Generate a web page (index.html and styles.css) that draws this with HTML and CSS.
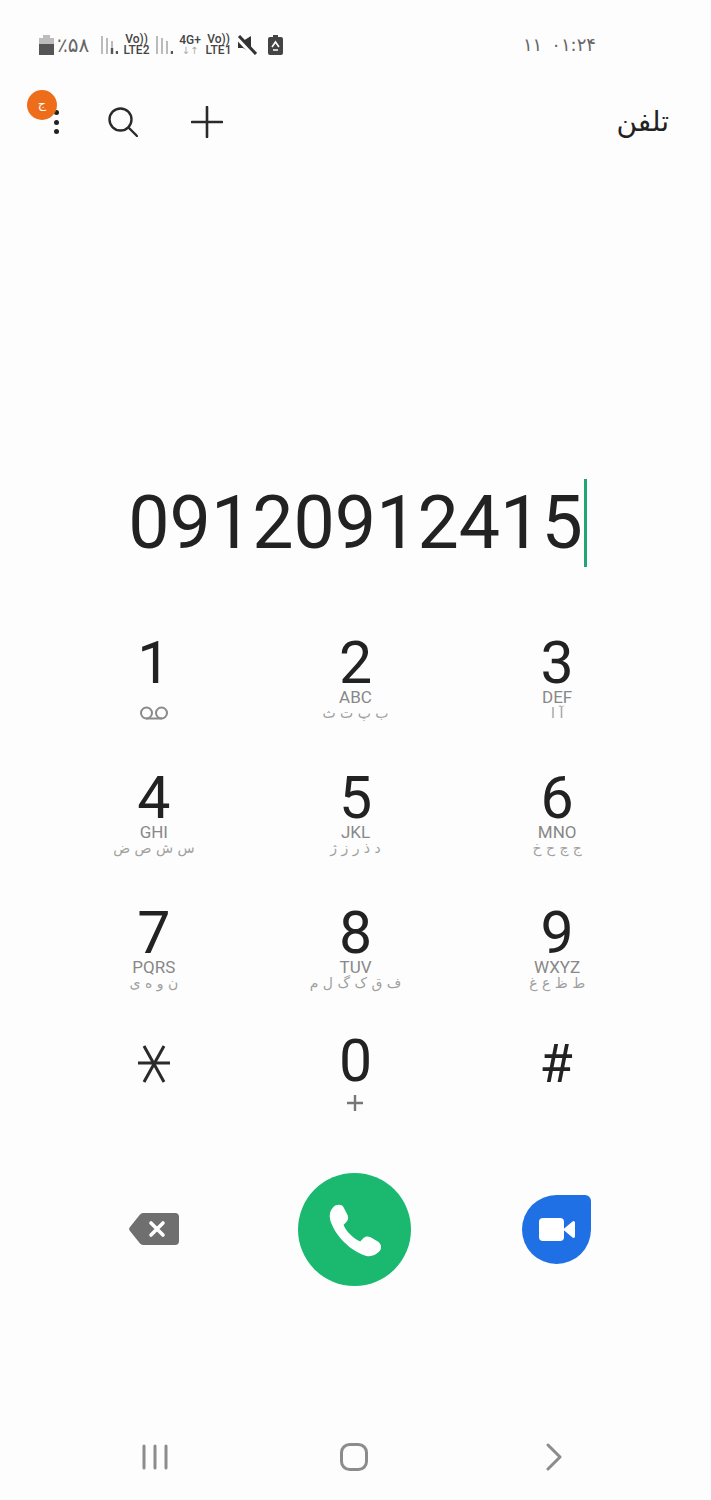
FILE: index.html
```html
<!DOCTYPE html>
<html lang="fa">
<head>
<meta charset="utf-8">
<title>تلفن</title>
<link rel="stylesheet" href="styles.css">
</head>
<body>
<div class="screen">
  <div class="status">
    <div class="status-left">
      <svg class="i-batt" viewBox="0 0 15 20"><path fill="#bdbdbd" d="M4 0h7v3h4v7H0V3h4z"/><path fill="#555" d="M0 9h15v11H0z"/></svg>
      <span class="pct">٪۵۸</span>
      <svg class="i-sig" viewBox="0 0 18 20"><path stroke="#bbb" stroke-width="2" d="M2 1v18M7 3v16M12 6v13"/><path stroke="#555" stroke-width="2.4" d="M12 13v6M17 16v3"/></svg>
      <span class="net w27"><b>Vo))</b><b>LTE2</b></span>
      <svg class="i-sig s2" viewBox="0 0 18 20"><path stroke="#bbb" stroke-width="2" d="M2 1v18M7 3v16M12 6v13"/><path stroke="#555" stroke-width="2.4" d="M17 16v3"/></svg>
      <span class="net w20 g2"><b>4G+</b><i>↓↑</i></span>
      <span class="net w27 g3"><b>Vo))</b><b>LTE1</b></span>
      <svg class="i-mute" viewBox="0 0 20 20"><path fill="#333" d="M1 6h5l8-5v17l-8-5H1z"/><path stroke="#fdfdfd" stroke-width="5" d="M1 3l16 17"/><path stroke="#333" stroke-width="3" d="M2 1l17 18"/></svg>
      <svg class="i-save" viewBox="0 0 15 20"><path fill="#444" d="M5 0h5v2h3a2 2 0 0 1 2 2v14a2 2 0 0 1-2 2H2a2 2 0 0 1-2-2V4a2 2 0 0 1 2-2h3z"/><path fill="none" stroke="#fff" stroke-width="1.6" d="M4 12l3.500-5 3.500 5M5 15h5"/></svg>
    </div>
    <div class="status-right"><span>۱۱</span><span>۰۱:۲۴</span></div>
  </div>

  <header class="appbar">
    <div class="tools">
      <div class="more">
        <span class="dot"></span><span class="dot"></span><span class="dot"></span>
        <span class="badge">ج</span>
      </div>
      <svg class="i-search" viewBox="0 0 30 30"><circle cx="12.500" cy="12.500" r="11" fill="none" stroke="#2a2a2a" stroke-width="2.400"/><path stroke="#2a2a2a" stroke-width="2.400" stroke-linecap="round" d="M20.500 20.500l8.500 8.500"/></svg>
      <svg class="i-plus" viewBox="0 0 32 32"><path stroke="#2a2a2a" stroke-width="2.600" stroke-linecap="round" d="M16 1v30M1 16h30"/></svg>
    </div>
    <h1 class="title">تلفن</h1>
  </header>

  <div class="display"><span class="number">09120912415</span><span class="caret"></span></div>

  <div class="keypad">
    <div class="key"><span class="digit">1</span><svg class="i-vm" viewBox="0 0 30 14"><circle cx="7.500" cy="7" r="5.500" fill="none" stroke="#8a8a8a" stroke-width="2"/><circle cx="22.500" cy="7" r="5.500" fill="none" stroke="#8a8a8a" stroke-width="2"/><path stroke="#8a8a8a" stroke-width="2" d="M7 12.500h16"/></svg></div>
    <div class="key"><span class="digit">2</span><span class="en">ABC</span><span class="fa">ب پ ت ث</span></div>
    <div class="key"><span class="digit">3</span><span class="en">DEF</span><span class="fa">آ ا</span></div>
    <div class="key"><span class="digit">4</span><span class="en">GHI</span><span class="fa">س ش ص ض</span></div>
    <div class="key"><span class="digit">5</span><span class="en">JKL</span><span class="fa">د ذ ر ز ژ</span></div>
    <div class="key"><span class="digit">6</span><span class="en">MNO</span><span class="fa">ج چ ح خ</span></div>
    <div class="key"><span class="digit">7</span><span class="en">PQRS</span><span class="fa">ن و ه ی</span></div>
    <div class="key"><span class="digit">8</span><span class="en">TUV</span><span class="fa">ف ق ک گ ل م</span></div>
    <div class="key"><span class="digit">9</span><span class="en">WXYZ</span><span class="fa">ط ظ ع غ</span></div>
    <div class="key last"><svg class="i-star" viewBox="0 0 32 38"><path stroke="#2a2a2a" stroke-width="3" d="M0 18h32M6 37L26 1M26 37L6 1"/></svg></div>
    <div class="key last"><span class="digit">0</span><svg class="i-zplus" viewBox="0 0 16 16"><path stroke="#777" stroke-width="2.400" d="M8 0v16M0 8h16"/></svg></div>
    <div class="key last"><span class="digit hash">#</span></div>
  </div>

  <div class="actions">
    <svg class="i-back" viewBox="0 0 50 32"><path fill="#6f6f6f" d="M14 0h32a4 4 0 0 1 4 4v24a4 4 0 0 1-4 4H14a4 4 0 0 1-3-1.500L1 18a3 3 0 0 1 0-4L11 1.500A4 4 0 0 1 14 0z"/><path stroke="#fff" stroke-width="3.600" stroke-linecap="round" d="M22 10l12 12M34 10L22 22"/></svg>
    <div class="call">
      <svg class="i-phone" viewBox="0 0 52 52"><path fill="#fff" d="M5 4C8 1 13 1 15 4L19 12C20 15 19 17 17 19L15 21C17 27 25 35 31 37L34 34C36 32 38 32 41 33L48 37C52 40 52 44 49 47C46 50 42 52 37 51C22 47 6 31 2 16C1 11 2 7 5 4Z"/></svg>
    </div>
    <div class="duo">
      <svg class="i-video" viewBox="0 0 37 23"><rect x="0" y="0" width="25" height="23" rx="4" fill="#fff"/><path fill="#fff" d="M24 11.500L33.500 3.500a1.500 1.500 0 0 1 2.500 1v14a1.500 1.500 0 0 1-2.500 1z"/></svg>
    </div>
  </div>

  <nav class="navbar">
    <svg class="i-nav1" viewBox="0 0 26 26"><path stroke="#8c8c8c" stroke-width="3" stroke-linecap="round" d="M2 2v22M13 2v22M24 2v22"/></svg>
    <svg class="i-nav2" viewBox="0 0 28 28"><rect x="1.500" y="1.500" width="25" height="25" rx="8" fill="none" stroke="#8c8c8c" stroke-width="3"/></svg>
    <svg class="i-nav3" viewBox="0 0 16 28"><path fill="none" stroke="#8c8c8c" stroke-width="3" stroke-linecap="round" stroke-linejoin="round" d="M2 2l12 12L2 26"/></svg>
  </nav>
</div>
</body>
</html>
```

FILE: styles.css
```css
* { box-sizing: border-box; }
html, body { margin: 0; padding: 0; background: #fdfdfd; }
body { font-family: "Roboto", "DejaVu Sans", sans-serif; }
.screen { width: 711px; height: 1500px; overflow: hidden; display: flex; flex-direction: column; }
svg { display: block; flex: none; }

.status { height: 32px; margin-top: 29px; padding: 0 115px 0 39px; display: flex; justify-content: space-between; align-items: center; }
.status-left { display: flex; align-items: center; }
.i-batt { width: 15px; height: 20px; }
.pct { font-family: "DejaVu Sans", sans-serif; font-size: 20px; color: #666; margin-left: 3px; width: 34px; line-height: 20px; white-space: nowrap; }
.i-sig { width: 18px; height: 20px; margin-left: 9px; }
.i-sig.s2 { margin-left: 5px; }
.net { display: flex; flex-direction: column; align-items: center; margin-left: 5px; line-height: 11px; font-size: 12px; color: #444; }
.net b { font-weight: 500; }
.net i { font-style: normal; font-size: 10px; font-family: "DejaVu Sans", sans-serif; color: #aaa; line-height: 10px; }
.net.g2 { margin-left: 7px; }
.w27 { width: 27px; }
.w20 { width: 20px; }
.i-mute { width: 20px; height: 20px; margin-left: 5px; }
.i-save { width: 15px; height: 20px; margin-left: 11px; }
.status-right { display: flex; gap: 9px; font-family: "DejaVu Sans", sans-serif; font-size: 18px; color: #666; line-height: 20px; }

.appbar { height: 62px; margin-top: 30px; padding: 0 42px 0 0; display: flex; justify-content: space-between; align-items: center; }
.tools { display: flex; align-items: center; }
.more { position: relative; margin-left: 53px; width: 6px; height: 24px; display: flex; flex-direction: column; justify-content: space-between; align-items: center; }
.dot { width: 5px; height: 5px; border-radius: 50%; background: #222; }
.badge { position: absolute; left: -26px; top: -20px; width: 30px; height: 30px; border-radius: 50%; background: #ee6d1b; color: #fff; font-family: "DejaVu Sans", sans-serif; font-size: 13px; line-height: 28px; text-align: center; }
.i-search { width: 30px; height: 30px; margin-left: 49px; }
.i-plus { width: 32px; height: 32px; margin-left: 53px; }
.title { margin: 0; font-family: "DejaVu Sans", sans-serif; font-weight: 400; font-size: 28px; color: #222; line-height: 40px; }

.display { height: 110px; margin-top: 315px; display: flex; justify-content: center; align-items: center; padding-left: 4px; }
.number { font-size: 73.500px; line-height: 90px; color: #222; white-space: nowrap; }
.caret { width: 3px; height: 88px; background: #1fa672; margin-left: 1px; }

.keypad { margin-top: 60px; padding: 0 53px; display: grid; grid-template-columns: repeat(3, 1fr); grid-auto-rows: 135px; }
.key { display: flex; flex-direction: column; align-items: center; }
.key.last { height: 127px; margin-top: -7px; }
.digit { font-size: 59px; line-height: 50px; color: #222; }
.digit.hash { font-size: 54px; line-height: 56px; padding-top: 0; margin-right: 2px; }
.en { font-size: 17px; line-height: 17px; color: #888; margin-top: 1px; }
.fa { font-family: "DejaVu Sans", sans-serif; font-size: 14px; line-height: 16px; color: #a0a0a0; white-space: nowrap; margin-top: -1px; }
.i-vm { width: 30px; height: 14px; margin-top: 18px; }
.i-star { width: 32px; height: 38px; margin-top: 9px; }
.i-zplus { width: 16px; height: 16px; margin-top: 9px; }

.actions { margin-top: -5px; padding: 0 53px; display: grid; grid-template-columns: repeat(3, 1fr); justify-items: center; align-items: center; height: 113px; }
.i-back { width: 50px; height: 32px; margin-right: 0; margin-top: -1px; }
.call { width: 113px; height: 113px; margin-right: 1px; border-radius: 50%; background: #1ab96f; display: flex; align-items: center; justify-content: center; }
.i-phone { width: 54px; height: 54px; }
.duo { width: 69px; height: 69px; margin-right: 2px; border-radius: 50% 6px 50% 50%; background: #1f6fe5; display: flex; align-items: center; justify-content: center; padding-left: 2px; }
.i-video { width: 37px; height: 23px; }

.navbar { margin-top: 156px; padding: 0 53px; display: grid; grid-template-columns: repeat(3, 1fr); justify-items: center; align-items: center; height: 30px; }
.i-nav1 { width: 26px; height: 26px; margin-left: 2px; }
.i-nav2 { width: 28px; height: 28px; margin-right: 2px; }
.i-nav3 { width: 16px; height: 28px; margin-right: 7px; }
```
